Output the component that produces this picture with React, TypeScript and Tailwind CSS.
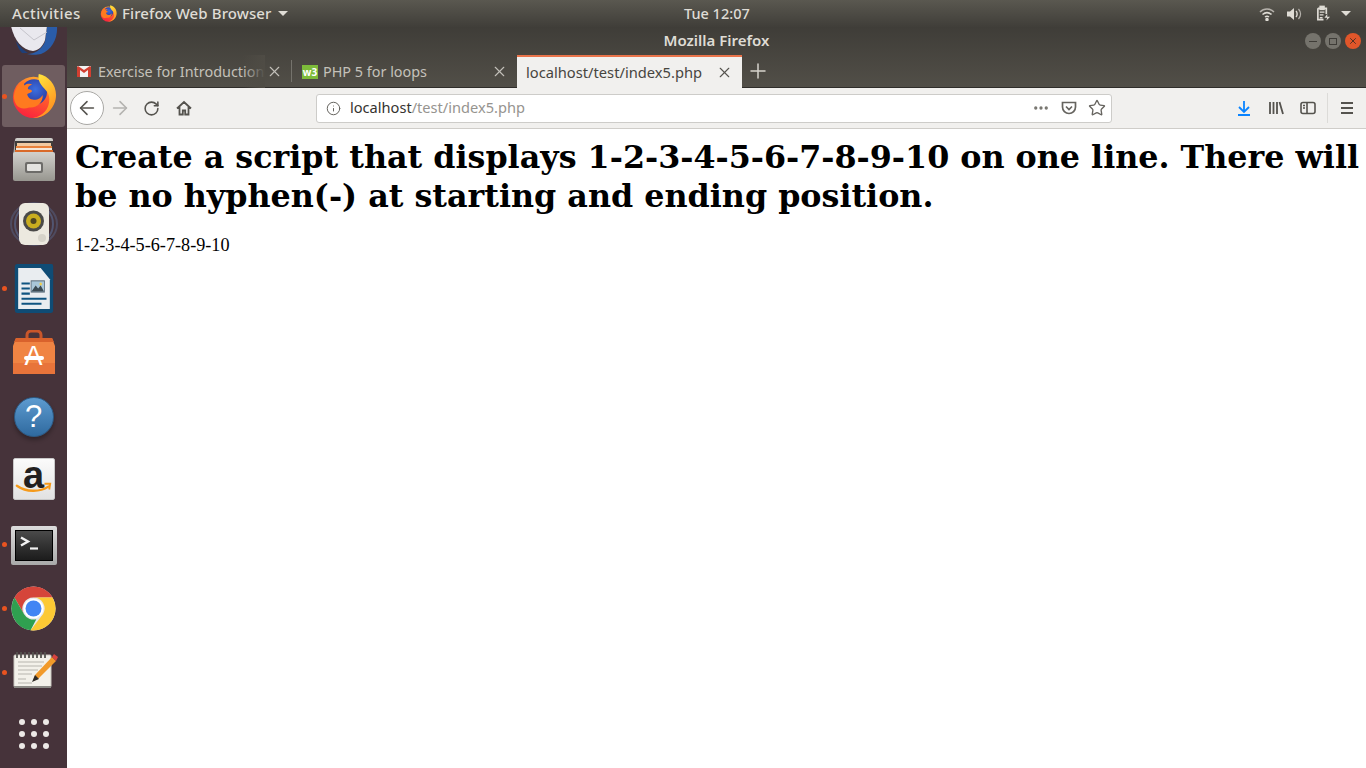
import { ArrowLeft, ArrowRight, Ellipsis, Info, Plus, RotateCw, Star, X } from 'lucide-react'
import type { ReactNode } from 'react'

const uiFont = "font-['Noto_Sans','Open_Sans',sans-serif]"

function FirefoxLogo({ className }: { className: string }) {
  return (
    <svg viewBox="0 0 48 48" className={className}>
      <defs>
        <linearGradient id="ffBody" x1="0.7" y1="0" x2="0.3" y2="1">
          <stop offset="0" stopColor="#ffb02e" />
          <stop offset="0.45" stopColor="#ff5a2c" />
          <stop offset="1" stopColor="#f9213f" />
        </linearGradient>
        <linearGradient id="ffFlame" x1="0.2" y1="0" x2="0.7" y2="1">
          <stop offset="0" stopColor="#ffe63d" />
          <stop offset="1" stopColor="#ff8a1e" />
        </linearGradient>
        <radialGradient id="ffGlobe" cx="0.55" cy="0.4" r="0.6">
          <stop offset="0" stopColor="#3b6fe0" />
          <stop offset="1" stopColor="#2a3a9e" />
        </radialGradient>
      </defs>
      <circle cx="23.5" cy="25.5" r="21.5" fill="url(#ffBody)" />
      <circle cx="24" cy="20" r="13.5" fill="url(#ffGlobe)" />
      <path d="M3 24c1-8 5-13 10-15l1 4c3-2 6-2 8-1-3 1-5 3-4 5 2 0 4 1 4 2-1 2-4 2-5 3 0 3 3 6 7 6 5 0 7-2 9-5 1 7-6 14-14 13C9 40 3 33 3 24z" fill="#ff7a1f" />
      <path d="M29 1c10 2 18 11 18 22 0 13-11 24-24 24 10-2 17-9 17-20 0-8-7-11-10-17-1-3-2-6-1-9z" fill="url(#ffFlame)" />
    </svg>
  )
}

function Thunderbird() {
  return (
    <svg viewBox="0 0 48 48" className="w-12 h-12">
      <path d="M37 18h10c1 12-5 24-16 28-4 1-10 1-14 0 8 0 14-4 18-12z" fill="#2a5ca8" />
      <path d="M1 18h36l-2 14c-2 6-6 10-12 11C12 42 4 32 1 18z" fill="#e9e8ee" />
      <path d="m10 20 14 12 13-8" fill="none" stroke="#c5c4cb" strokeWidth="1" />
      <path d="M6 33c3 5 7 9 12 12h-6c-3-3-5-7-6-12z" fill="#1f3f78" />
    </svg>
  )
}

function FilesIcon() {
  return (
    <svg viewBox="0 0 48 48" className="w-12 h-12">
      <defs>
        <linearGradient id="cab" x1="0" y1="0" x2="0" y2="1">
          <stop offset="0" stopColor="#d2d1cd" />
          <stop offset="1" stopColor="#97968f" />
        </linearGradient>
      </defs>
      <path d="M5 4a2 2 0 0 1 2-2h34a2 2 0 0 1 2 2v16H3z" fill="url(#cab)" />
      <rect x="5" y="5" width="38" height="13" fill="#3f3d3b" />
      <rect x="7" y="7" width="34" height="3" fill="#f0c9a0" />
      <rect x="6" y="10" width="36" height="2" fill="#e8813a" />
      <rect x="6" y="12" width="36" height="2" fill="#f5e7d6" />
      <rect x="5" y="14" width="38" height="2" fill="#d96a2a" />
      <rect x="3" y="16" width="42" height="29" rx="2" fill="url(#cab)" />
      <rect x="15" y="26" width="18" height="11" rx="2" fill="#6d6c69" />
      <rect x="17" y="28" width="14" height="7" rx="1" fill="#e4e3e0" />
    </svg>
  )
}

function SpeakerIcon() {
  return (
    <svg viewBox="0 0 48 48" className="w-12 h-12">
      <ellipse cx="24" cy="24" rx="23" ry="21" fill="none" stroke="#5e77a8" strokeWidth="2" opacity="0.35" />
      <ellipse cx="24" cy="24" rx="19" ry="20" fill="none" stroke="#5e77a8" strokeWidth="2" opacity="0.5" />
      <rect x="9" y="3" width="30" height="42" rx="6" fill="#ece9df" />
      <circle cx="23.500" cy="21" r="10.500" fill="#4a4a48" />
      <circle cx="23.500" cy="21" r="7.500" fill="#c9ad1f" />
      <circle cx="23.500" cy="21" r="3" fill="#4f4620" />
      <circle cx="32" cy="38" r="4" fill="#d6d3c9" />
    </svg>
  )
}

function WriterIcon() {
  return (
    <svg viewBox="0 0 48 48" preserveAspectRatio="none" className="w-[40px] h-[49px]">
      <path d="M1 3a3 3 0 0 1 3-3h32l11 11v34a3 3 0 0 1-3 3H4a3 3 0 0 1-3-3z" fill="#0f4c75" />
      <path d="M5 4h27l11 11v29H5z" fill="#e9edf0" />
      <path d="M30 0h15a2 2 0 0 1 2 2v14z" fill="#0f4c75" />
      <path d="M9 18h10v2H9zM9 23h10v2H9zM9 28h10v2H9zM9 33h30v2H9zM9 38h24v2H9z" fill="#0f5480" />
      <rect x="20" y="16" width="17" height="12" fill="#5a6b78" />
      <rect x="21" y="17" width="15" height="10" fill="#a9c6d8" />
      <circle cx="32" cy="19.500" r="1.500" fill="#f2cf4a" />
      <path d="m21 27 5-6 3 3 3-3 4 6z" fill="#3c4a52" />
    </svg>
  )
}

function StoreIcon() {
  return (
    <div className="relative w-[42px] h-[44px]">
      <svg viewBox="0 0 42 44" className="w-[42px] h-[44px]">
        <path d="M14 12V5a4 4 0 0 1 4-4h6a4 4 0 0 1 4 4v7" fill="none" stroke="#c9562a" strokeWidth="3" />
        <path d="M3 8h36l3 8v28H0V16z" fill="#f08443" />
        <path d="M0 33h42v11H0z" fill="#e8743a" />
        <path d="M3 8h36l2 4H1z" fill="#d9622c" />
        <rect x="11" y="26" width="20" height="4" rx="2" fill="#fff" />
      </svg>
      <span className="absolute inset-0 flex items-center justify-center pt-[9px] text-[27px] leading-none font-normal text-white font-['Liberation_Sans',sans-serif]">
        A
      </span>
    </div>
  )
}

function HelpIcon() {
  return (
    <div className="flex items-center justify-center w-10 h-10 mt-px rounded-full bg-gradient-to-b from-[#5d9bd0] to-[#2f6a9f] border border-[#2b5a85] shadow-[0_3px_4px_rgba(0,0,0,0.3)]">
      <span className="text-[31px] leading-none font-normal text-white font-['Liberation_Sans',sans-serif]">?</span>
    </div>
  )
}

function AmazonIcon() {
  return (
    <div className="relative flex justify-center w-[42px] h-[42px] mb-[2px] rounded-[2px] bg-gradient-to-b from-[#fbfbfb] to-[#e2e2e2] border border-[#c9c9c9]">
      <span className="text-[38px] leading-[32px] font-bold text-[#221f1f] font-['Liberation_Sans',sans-serif]">a</span>
      <svg viewBox="0 0 42 42" className="absolute inset-0 w-full h-full">
        <path d="M3 28c10 7 24 7 33 1" fill="none" stroke="#f59a1b" strokeWidth="2.500" strokeLinecap="round" />
        <path d="m32 26 6 0-1 6" fill="none" stroke="#f59a1b" strokeWidth="2" />
      </svg>
    </div>
  )
}

function TerminalIcon() {
  return (
    <div className="flex w-[46px] h-[39px] mt-[2px] p-[4px] rounded-[2px] bg-gradient-to-b from-[#dcdcdc] to-[#a9a9a9]">
      <div className="flex-1 border border-black bg-gradient-to-b from-[#4a4a4a] to-[#1c1c1c]">
        <svg viewBox="0 0 36 28" className="w-full h-full">
          <path d="m5 6 7 4-7 4" fill="none" stroke="#f2f2f2" strokeWidth="2.400" />
          <path d="M14 17h8" stroke="#f2f2f2" strokeWidth="2.200" />
        </svg>
      </div>
    </div>
  )
}

function ChromeIcon() {
  return (
    <svg viewBox="0 0 48 48" className="w-[45px] h-[45px]">
      <circle cx="24" cy="24" r="23.500" fill="#e8eaed" />
      <path d="M24 .5A23.500 23.500 0 0 1 44.350 12.250H24A11.750 11.750 0 0 0 13.800 29.900L3.650 12.250A23.500 23.500 0 0 1 24 .5z" fill="#d5453a" />
      <path d="M3.650 12.250 13.800 29.900A11.750 11.750 0 0 0 27 35.400L20.900 47.300A23.500 23.500 0 0 1 3.650 12.250z" fill="#2fa050" />
      <path d="M44.350 12.250A23.500 23.500 0 0 1 20.900 47.300L34.200 29.900A11.750 11.750 0 0 0 24 12.250z" fill="#fcc934" />
      <circle cx="24" cy="24" r="10.500" fill="#fff" />
      <circle cx="24" cy="24" r="8.500" fill="#4285f4" />
    </svg>
  )
}

function NotesIcon() {
  return (
    <svg viewBox="0 0 48 48" className="w-12 h-12">
      <rect x="4" y="7" width="37" height="32" rx="1" fill="#f3f1ea" stroke="#c9c7bf" />
      <rect x="4" y="38" width="37" height="2" fill="#8b8a85" />
      <path d="M7 4v6M11 4v6M15 4v6M19 4v6M23 4v6M27 4v6M31 4v6M35 4v6" stroke="#55534f" strokeWidth="1.800" />
      <path d="M8 14h26M8 18h24M8 22h20M8 26h14M8 31h8M8 35h14" stroke="#b7b5ae" strokeWidth="1" />
      <path d="m23 33 2-6 17-18 4 4-18 18z" fill="#f19a2a" />
      <path d="m42 9 2-3 4 3-2 4z" fill="#d9443f" />
      <path d="m22 34 3-7 4 4z" fill="#2d2a26" />
    </svg>
  )
}

function AppGrid() {
  return (
    <div className="grid grid-cols-3 gap-[6px] mb-1">
      {[0, 1, 2, 3, 4, 5, 6, 7, 8].map((n) => (
        <span key={n} className="w-[6px] h-[6px] rounded-full bg-[#ece9e6]" />
      ))}
    </div>
  )
}

function DockItem({ children, running, active }: { children: ReactNode; running?: boolean; active?: boolean }) {
  return (
    <div className={`relative flex items-center justify-center shrink-0 h-[62px] my-px mx-[2px] rounded-[3px] ${active ? 'bg-[#6f5d60]' : ''}`}>
      {running && <span className="absolute left-[0px] top-[29px] w-[5px] h-[5px] rounded-full bg-[#e95420]" />}
      {children}
    </div>
  )
}

function Dock() {
  return (
    <aside className="w-[67px] shrink-0 bg-[#46333a] overflow-hidden">
      <div className="flex flex-col -mt-[27px]">
        <DockItem><Thunderbird /></DockItem>
        <DockItem running active><FirefoxLogo className="w-[46px] h-[46px]" /></DockItem>
        <DockItem><FilesIcon /></DockItem>
        <DockItem><SpeakerIcon /></DockItem>
        <DockItem running><WriterIcon /></DockItem>
        <DockItem><StoreIcon /></DockItem>
        <DockItem><HelpIcon /></DockItem>
        <DockItem><AmazonIcon /></DockItem>
        <DockItem running><TerminalIcon /></DockItem>
        <DockItem running><ChromeIcon /></DockItem>
        <DockItem running><NotesIcon /></DockItem>
        <DockItem><AppGrid /></DockItem>
      </div>
    </aside>
  )
}

function TopBar() {
  return (
    <header className={`relative z-10 flex items-center h-[27px] shrink-0 px-3 bg-gradient-to-b from-[#5a5850] to-[#403e39] text-[15px] font-medium text-[#dfdcd5] ${uiFont}`}>
      <span className="w-[88px] tracking-[0.4px]">Activities</span>
      <FirefoxLogo className="w-[17px] h-[17px]" />
      <span className="ml-[5px] tracking-[0.1px]">Firefox Web Browser</span>
      <span className="ml-[6px] border-x-[5px] border-x-transparent border-t-[5px] border-t-[#dfdcd5]" />
      <span className="absolute left-[684px] text-[14.500px]">Tue 12:07</span>
      <div className="ml-auto flex items-center pr-[3px]">
        <svg viewBox="0 0 16 14" className="w-[16px] h-[14px]" fill="none" stroke="#dfdcd5" strokeWidth="1.500">
          <path d="M1 5c4-4 10-4 14 0" opacity="0.7" />
          <path d="M3.500 7.500c3-2.500 6-2.500 9 0" />
          <path d="M6 10c1.300-1 2.700-1 4 0" />
          <circle cx="8" cy="12.500" r="1" fill="#dfdcd5" />
        </svg>
        <svg viewBox="0 0 16 14" className="w-[16px] h-[14px] ml-[11px]" fill="#dfdcd5">
          <path d="M1 4.500h3L8 1v12L4 9.500H1z" />
          <path d="M10 4c1.500 1.500 1.500 4.500 0 6" fill="none" stroke="#dfdcd5" strokeWidth="1.400" />
          <path d="M12.500 2c2.500 3 2.500 7 0 10" fill="none" stroke="#dfdcd5" strokeWidth="1.200" opacity="0.7" />
        </svg>
        <svg viewBox="0 0 16 17" className="w-[15px] h-[17px] ml-[14px]" fill="none" stroke="#dfdcd5" strokeWidth="1.800">
          <path d="M2 3h9v6M2 3v12h6" />
          <rect x="4.500" y="1" width="4" height="3" fill="#dfdcd5" />
          <path d="M4 7h5M4 10h4M4 13h3" strokeWidth="1.400" />
          <path d="m12 9-3 4h3l-1 3 4-4h-3z" fill="#dfdcd5" stroke="none" />
        </svg>
        <span className="ml-[10px] border-x-[5px] border-x-transparent border-t-[5px] border-t-[#dfdcd5]" />
      </div>
    </header>
  )
}

function WindowButton({ children, close }: { children: ReactNode; close?: boolean }) {
  return (
    <span className={`flex items-center justify-center w-4 h-4 rounded-full ${close ? 'bg-[#e0562a] text-[#3a2a22]' : 'bg-[#75736c] text-[#3f3d38]'}`}>
      {children}
    </span>
  )
}

function TitleBar() {
  return (
    <div className="relative flex items-center justify-center h-[28px] pb-[2px] shrink-0">
      <span className={`text-[15px] font-semibold text-[#dfdcd5] ${uiFont}`}>Mozilla Firefox</span>
      <div className="absolute right-[5px] top-[6px] flex gap-1">
        <WindowButton><span className="w-2 h-px bg-current" /></WindowButton>
        <WindowButton><span className="w-2 h-[7px] border border-current" /></WindowButton>
        <WindowButton close><X size={10} strokeWidth={2} /></WindowButton>
      </div>
    </div>
  )
}

function Tab({ icon, title, active, fade }: { icon: ReactNode; title: string; active?: boolean; fade?: boolean }) {
  return (
    <div className={`relative flex items-center w-[225px] h-[33px] pr-[9px] shrink-0 ${uiFont} ${active ? 'bg-[#f1f0ee] text-[#47453f] border-t-2 border-[#e9734a] pl-[9px] text-[14.700px]' : 'text-[#c4c1ba] pl-[10px] pt-px text-[14.400px]'}`}>
      {icon}
      <span className="flex-1 whitespace-nowrap overflow-hidden">{title}</span>
      {fade && <span className="absolute left-[176px] top-0 w-[22px] h-full bg-gradient-to-r from-transparent to-[#4f4c45]" />}
      <X size={17} strokeWidth={1.600} className={active ? 'text-[#55534e]' : 'text-[#c4c1ba]'} />
    </div>
  )
}

function TabStrip() {
  return (
    <div className="flex items-center h-[33px] shrink-0 border-b border-[#2f2d2a]">
      <Tab
        fade
        title="Exercise for Introduction"
        icon={
          <svg viewBox="0 0 14 11" className="w-[14px] h-[11px] mr-[7px] shrink-0">
            <rect width="14" height="11" rx="1" fill="#f2f2f2" />
            <path d="M0 1v10h3V4l4 3 4-3v7h3V1l-1-1-6 4-6-4z" fill="#d23f31" />
          </svg>
        }
      />
      <span className="w-px h-[22px] -ml-px bg-[#75736c] shrink-0" />
      <Tab
        title="PHP 5 for loops"
        icon={
          <span className="flex items-center justify-center w-[16px] h-[14px] mr-[5px] shrink-0 bg-[#7dbb3a] text-[10px] leading-none font-bold text-white">
            w3
          </span>
        }
      />
      <Tab active title="localhost/test/index5.php" icon={null} />
      <Plus size={24} strokeWidth={1.500} className="ml-[4px] text-[#d6d3cc]" />
    </div>
  )
}

function NavBar() {
  return (
    <div className={`flex items-center h-[41px] shrink-0 pl-[3px] pr-[10px] bg-[#f1f0ee] border-b border-[#cfcdc9] text-[#55534e] ${uiFont}`}>
      <span className="flex items-center justify-center w-[34px] h-[34px] rounded-full bg-white border border-[#a9a8a5]">
        <ArrowLeft size={22} strokeWidth={1.700} />
      </span>
      <ArrowRight size={22} strokeWidth={1.700} className="ml-[5px] text-[#b4b3b0]" />
      <RotateCw size={17} strokeWidth={2.200} className="ml-[12px]" />
      <svg viewBox="0 0 16 16" className="w-4 h-4 ml-[16px]" fill="none" stroke="currentColor" strokeWidth="1.800">
        <path d="M1 8.500 8 2l7 6.500M3.500 7v7.500h3.300V10.500h2.400v4h3.300V7" />
      </svg>
      <div className="flex items-center w-[796px] h-[29px] ml-[124px] pl-[9px] pr-[5px] rounded-[3px] bg-white border border-[#cdccc9] text-[14.600px]">
        <Info size={15} strokeWidth={1.600} className="text-[#66645f]" />
        <span className="ml-[9px] text-[#35332f]">localhost</span>
        <span className="text-[#96948f]">/test/index5.php</span>
        <Ellipsis size={18} strokeWidth={2.400} className="ml-auto text-[#77756f]" />
        <svg viewBox="0 0 16 16" className="w-4 h-4 ml-[11px]" fill="none" stroke="#66645f" strokeWidth="1.700">
          <path d="M1.500 2.500h13V7a6.500 6.500 0 0 1-13 0z" />
          <path d="m5 6.500 3 3 3-3" />
        </svg>
        <Star size={18} strokeWidth={1.800} className="ml-[11px] text-[#66645f]" />
      </div>
      <svg viewBox="0 0 16 16" className="w-4 h-4 ml-[124px] text-[#0a84ff]" fill="none" stroke="currentColor" strokeWidth="1.800">
        <path d="M8 1v10M3 7l5 5 5-5M2 15h12" />
      </svg>
      <svg viewBox="0 0 16 16" className="w-4 h-4 ml-[16px]" fill="none" stroke="currentColor" strokeWidth="1.800">
        <path d="M2 2v12M5.500 2v12M9 2v12M11.500 2l3.500 12" />
      </svg>
      <svg viewBox="0 0 16 16" className="w-4 h-4 ml-[16px]" fill="none" stroke="currentColor" strokeWidth="1.600">
        <rect x="1" y="2.500" width="14" height="11" rx="2" />
        <path d="M7 2.500v11M3 5.500h2M3 8h2" />
      </svg>
      <span className="w-px h-[30px] ml-[11px] bg-[#dcdbd8]" />
      <svg viewBox="0 0 14 14" className="w-[14px] h-[14px] ml-[12px]" fill="none" stroke="currentColor" strokeWidth="1.800">
        <path d="M1 2h12M1 7h12M1 12h12" />
      </svg>
    </div>
  )
}

export default function App() {
  return (
    <div className="flex flex-col w-[1366px] h-[768px] overflow-hidden bg-white">
      <TopBar />
      <div className="flex flex-1 min-h-0">
        <Dock />
        <main className="flex flex-col flex-1 min-w-0">
          <div className="bg-gradient-to-b from-[#3f3d38] to-[#524f48] bg-[length:100%_61px]">
            <TitleBar />
            <TabStrip />
          </div>
          <NavBar />
          <article className="flex-1 bg-white pl-2 pr-1 pt-[8px] text-black">
            <h1 className="text-[31.750px] leading-[39px] font-bold font-['DejaVu_Serif',serif]">
              Create a script that displays 1-2-3-4-5-6-7-8-9-10 on one line. There will be no hyphen(-) at starting and ending position.
            </h1>
            <p className="mt-[20px] text-[18.200px] leading-[21px] font-['Liberation_Serif',serif]">1-2-3-4-5-6-7-8-9-10</p>
          </article>
        </main>
      </div>
    </div>
  )
}
